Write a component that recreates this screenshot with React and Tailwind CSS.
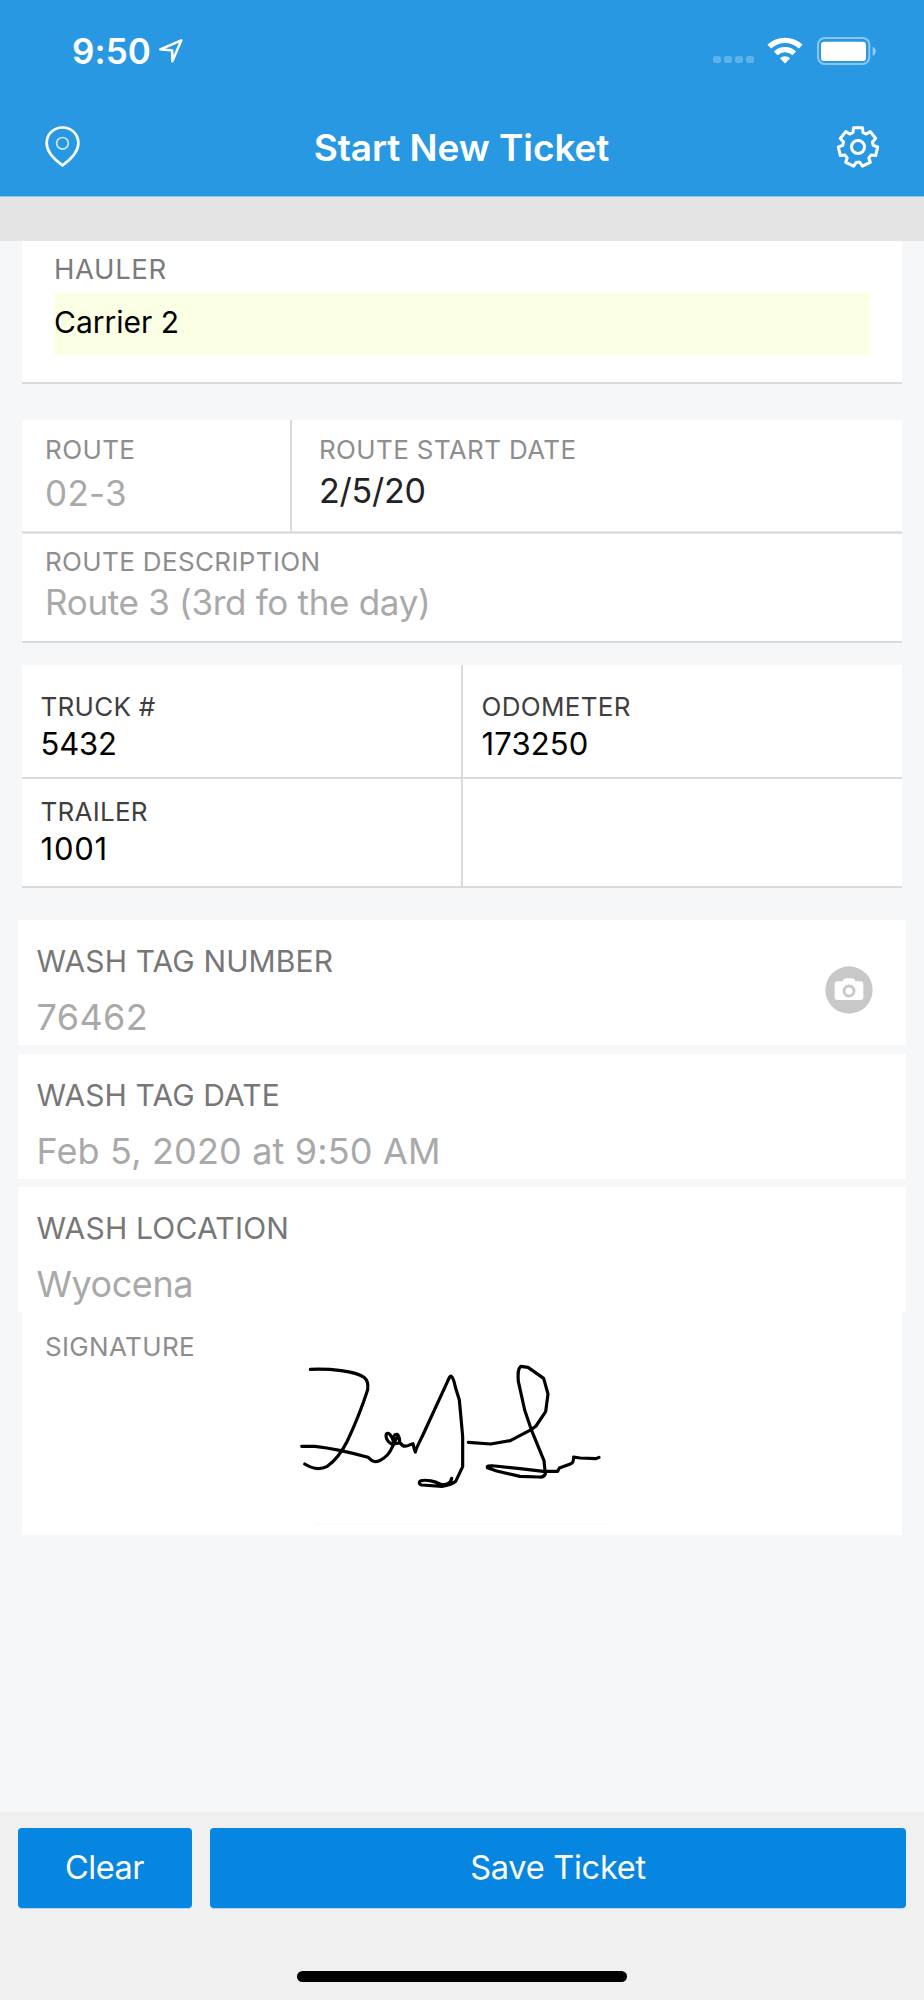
const washFields = [
  { label: 'WASH TAG NUMBER', value: '76462', tracking: 'tracking-[0.12px]', valueTracking: 'tracking-[0.4px]', camera: true },
  { label: 'WASH TAG DATE', value: 'Feb 5, 2020 at 9:50 AM', tracking: 'tracking-[0.1px]', valueTracking: 'tracking-[0.15px]' },
  { label: 'WASH LOCATION', value: 'Wyocena', tracking: 'tracking-[0.2px]', valueTracking: 'tracking-[-0.45px]' },
]

// seven-toothed outline around the origin
function gearPath() {
  const points = []
  for (let i = 0; i < 7; i++) {
    const mid = (i * 360) / 7
    const corners = [[-19, 46], [-13, 59], [13, 59], [19, 46]]
    corners.forEach(([offset, r]) => {
      const a = ((mid + offset) * Math.PI) / 180
      points.push(`${(r * Math.sin(a)).toFixed(1)} ${(-r * Math.cos(a)).toFixed(1)}`)
    })
  }
  return `M${points.join('L')}Z`
}

function LocationArrow() {
  return (
    <svg className="w-6 h-6" viewBox="0 0 72 72" fill="none" stroke="white" strokeWidth="7.5" strokeLinejoin="round">
      <path d="M67 4L4 31L39.5 34.5L40 67Z" />
    </svg>
  )
}

function SignalDots() {
  return (
    <div className="flex gap-[3.5px] mt-[18px]">
      {[0, 1, 2, 3].map(i => (
        <span key={i} className="w-[7.5px] h-[7.5px] rounded-[2px] bg-white/25" />
      ))}
    </div>
  )
}

function WifiIcon() {
  return (
    <svg className="w-9 h-[27px]" viewBox="0 0 108 81" fill="none" stroke="white">
      <path d="M6.8 29.1A68 68 0 0 1 101.2 29.1" strokeWidth="16" />
      <path d="M26.2 49.2A40 40 0 0 1 81.8 49.2" strokeWidth="16" />
      <path d="M54 79.5L38.7 64A22 22 0 0 1 69.3 64Z" fill="white" stroke="none" />
    </svg>
  )
}

function BatteryIcon() {
  return (
    <svg className="w-[59px] h-7" viewBox="0 0 177 84">
      <rect x="3" y="3" width="154" height="78" rx="20" fill="none" stroke="white" strokeOpacity="0.45" strokeWidth="6" />
      <rect x="12" y="14" width="135" height="58" rx="10" fill="white" />
      <path d="M167 29C179 33 179 53 167 57Z" fill="white" fillOpacity="0.5" />
    </svg>
  )
}

function PinIcon() {
  return (
    <svg className="w-[35px] h-[41px]" viewBox="0 0 105 123" fill="none" stroke="white">
      <path
        d="M52.5 118C27 100 5 78 5 52C5 24 26 4.5 52.5 4.5C79 4.500 100 24 100 52C100 78 78 100 52.5 118Z"
        strokeWidth="8"
        strokeLinejoin="round"
      />
      <circle cx="52.5" cy="52" r="17.5" strokeWidth="5" strokeOpacity="0.75" />
    </svg>
  )
}

function GearIcon() {
  return (
    <svg className="w-11 h-11" viewBox="-66 -66 132 132" fill="none" stroke="white" strokeWidth="9" strokeLinejoin="round">
      <path d={gearPath()} />
      <circle r="19.5" />
    </svg>
  )
}

function CameraIcon() {
  return (
    <svg className="w-12 h-12" viewBox="-72 -72 144 144">
      <circle r="71" fill="#c8c8c8" />
      <path
        d="M-34 -26H-19C-17 -32 -14 -35 -9 -35H9C14 -35 17 -32 19 -26H34Q43 -26 43 -17V21Q43 30 34 30H-34Q-43 30 -43 21V-17Q-43 -26 -34 -26Z"
        fill="white"
      />
      <circle cy="3" r="15" fill="none" stroke="#c8c8c8" strokeWidth="9" />
    </svg>
  )
}

function SignatureDrawing() {
  return (
    <svg
      className="w-[340px] h-[175px]"
      viewBox="0 60 1020 525"
      fill="none"
      stroke="black"
      strokeWidth="9.5"
      strokeLinecap="round"
      strokeLinejoin="round"
    >
      <path d="M91 88C150 86 225 92 252 112C264 122 265 135 263 149C250 190 222 260 202 303C182 343 160 366 142 379C120 390 94 385 74 372" />
      <path d="M65 319H105C160 325 225 341 264 352L276 362C290 370 310 358 322 345C333 333 337 320 346 301C352 293 358 286 352 283C342 281 338 293 342 305C346 313 360 312 359 300C357 288 352 282 346 284M342 314C327 311 318 298 318 288C318 278 326 278 330 284C337 292 340 300 341 308M358 306C366 318 376 322 388 315L399 311L402 324L406 336C410 320 422 300 430 282L500 130C506 117 510 107 513 108C519 112 523 125 526 141L538 180L544 245L548 290V380L527 424C515 434 503 437 486 439L425 435C416 433 416 425 423 422C440 418 465 424 480 432C498 437 512 431 515 415M500 436L520 428" />
      <path d="M565 307L632 312L691 302L755 268L768 258L797 215L804 162L791 115L744 82L722 79C712 88 714 105 715 124L734 210L755 272L792 362L796 402C792 411 786 412 778 411L720 409L650 393L622 383C620 376 630 378 645 378L720 386L790 394L833 394L838 384L871 372C879 369 880 365 881 351L900 354L948 356L957 352" />
      <path d="M108 553H985" stroke="#f8f8f8" strokeWidth="3" strokeLinecap="butt" />
    </svg>
  )
}

function TruckCell({ label, value, tracking = '', valueTracking = '', className = '' }) {
  return (
    <div className={`pl-[18.5px] border-b-2 border-[#dadada] ${className}`}>
      <div className={`text-[26px] leading-[30px] text-[#3f3f3f] ${tracking}`}>{label}</div>
      <div className={`mt-1 text-[31px] leading-9 text-black ${valueTracking}`}>{value}</div>
    </div>
  )
}

export default function App() {
  return (
    <div className="w-[924px] h-[2000px] flex flex-col overflow-hidden bg-[#f6f7f9] font-['Inter','Liberation_Sans',sans-serif] whitespace-nowrap">
      <header className="h-[197px] shrink-0 bg-[#2998e3] border-b border-[#8fc4ec] text-white">
        <div className="h-[101px] flex items-center justify-between pl-[72px] pr-[48px]">
          <div className="flex items-center gap-2">
            <span className="text-[35px] leading-10 font-semibold tracking-[0.1px]">9:50</span>
            <LocationArrow />
          </div>
          <div className="flex items-center">
            <SignalDots />
            <div className="ml-[13.5px]"><WifiIcon /></div>
            <div className="ml-[14px]"><BatteryIcon /></div>
          </div>
        </div>
        <div className="h-[91px] flex items-center justify-between pl-[45px] pr-[44px]">
          <PinIcon />
          <h1 className="mt-0.5 ml-[7px] text-[37px] leading-[44px] font-semibold tracking-[-0.08px]">Start New Ticket</h1>
          <GearIcon />
        </div>
      </header>

      <div className="h-11 shrink-0 bg-[#e4e4e4]" />

      <main className="flex-1 min-h-0">
        <section className="mx-[22px] h-[143px] px-8 pt-3 bg-white border-b-2 border-[#dadada]">
          <div className="text-[27.5px] leading-8 text-[#7a7a7a] tracking-[0.6px]">HAULER</div>
          <div className="mt-2 h-[62px] bg-[#fbffe3] text-[30px] leading-[59px] text-black">Carrier 2</div>
        </section>

        <section className="mx-[22px] mt-9 bg-white">
          <div className="flex h-[111px]">
            <div className="w-[270px] pl-[23px] pt-[15px] border-r-2 border-[#dadada]">
              <div className="text-[26px] leading-[30px] text-[#8e8e8e] tracking-[0.4px]">ROUTE</div>
              <div className="mt-2 text-[35px] leading-10 text-[#a9a9a9] tracking-[0.3px]">02-3</div>
            </div>
            <div className="pl-[27px] pt-[15px]">
              <div className="text-[26px] leading-[30px] text-[#8e8e8e] tracking-[0.36px]">ROUTE START DATE</div>
              <div className="mt-1.5 text-[34px] leading-10 text-[#222] tracking-[-0.25px]">2/5/20</div>
            </div>
          </div>
          <div className="h-[3px] bg-[#d8d8d8] border-y border-[#e6e6e6]" />
          <div className="h-[109px] pl-[23px] pt-[13px] border-b-2 border-[#dadada]">
            <div className="text-[26px] leading-[30px] text-[#8e8e8e] tracking-[0.36px]">ROUTE DESCRIPTION</div>
            <div className="mt-[5px] text-[35px] leading-10 text-[#a9a9a9] tracking-[-0.31px]">Route 3 (3rd fo the day)</div>
          </div>
        </section>

        <section className="mx-[22px] mt-[22px] grid grid-cols-[441px_439px] bg-white">
          <TruckCell label="TRUCK #" value="5432" tracking="tracking-[0.28px]" valueTracking="tracking-[-0.2px]" className="h-[114px] pt-[27px] border-r-2" />
          <TruckCell label="ODOMETER" value="173250" tracking="tracking-[0.32px]" valueTracking="tracking-[0.15px]" className="h-[114px] pt-[27px]" />
          <TruckCell label="TRAILER" value="1001" tracking="tracking-[0.26px]" valueTracking="tracking-[0.8px]" className="h-[109px] pt-[18px] border-r-2" />
          <TruckCell className="h-[109px]" />
        </section>

        <section className="mx-[18px] mt-8 flex flex-col gap-[8.5px]">
          {washFields.map(field => (
            <div key={field.label} className="h-[125px] flex justify-between pl-[18.5px] pr-[33px] bg-white">
              <div className="pt-[23px]">
                <div className={`text-[30px] leading-9 text-[#777] ${field.tracking}`}>{field.label}</div>
                <div className={`mt-4 text-[36px] leading-[45px] text-[#a9a9a9] ${field.valueTracking}`}>{field.value}</div>
              </div>
              {field.camera && <div className="pt-[45.5px]"><CameraIcon /></div>}
            </div>
          ))}
        </section>

        <section className="mx-[22px] h-[223px] bg-white">
          <div className="h-12 pl-[23px] pt-5 text-[26px] leading-[30px] text-[#8e8e8e] tracking-[0.34px]">SIGNATURE</div>
          <div className="pl-[258px]">
            <SignatureDrawing />
          </div>
        </section>
      </main>

      <footer className="h-[188px] shrink-0 px-[18px] pt-4 bg-[#f0f0f0]">
        <div className="flex gap-[18px] text-[32.5px] text-white">
          <button className="w-[174px] h-20 pt-px pr-px rounded bg-[#0686e0] tracking-[-0.5px] shadow-[0_1px_0_#b4d6f0]">Clear</button>
          <button className="flex-1 h-20 pt-px rounded bg-[#0686e0] tracking-[-0.25px] shadow-[0_1px_0_#b4d6f0]">Save Ticket</button>
        </div>
        <div className="mx-auto mt-[63px] w-[330px] h-[11px] rounded-full bg-black" />
      </footer>
    </div>
  )
}
